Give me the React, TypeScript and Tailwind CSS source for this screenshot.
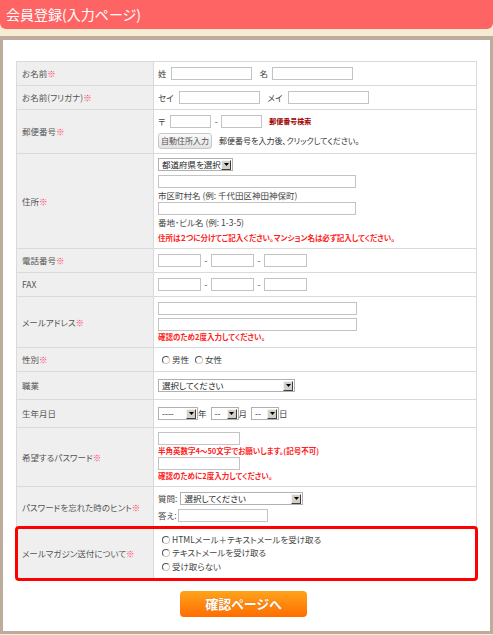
import React from 'react'

type RowProps = {
  label: string
  req?: boolean
  h: string
  children: React.ReactNode
}

const Row = ({ label, req, h, children }: RowProps) => (
  <div className={`flex border-b border-[#dadada] ${h}`}>
    <div className="flex w-[137px] shrink-0 items-center border-r border-[#dadada] bg-[#efefef] pl-[5px] text-[8.5px] text-[#555]">
      {label}
      {req && <span className="text-[#ff4466]">※</span>}
    </div>
    <div className="flex flex-1 flex-col justify-center pl-[4px] text-[8.5px] text-[#444]">{children}</div>
  </div>
)

const TextBox = ({ className }: { className: string }) => (
  <input type="text" className={`h-[13px] shrink-0 border border-[#c3c3c3] bg-white ${className}`} />
)

const SelectBox = ({ className, text }: { className: string; text: string }) => (
  <div className={`flex h-[13px] shrink-0 items-center justify-between border border-[#b0b0b0] bg-white pl-[3px] pr-px ${className}`}>
    <span className="text-[8.5px] leading-none text-[#222]">{text}</span>
    <span className="flex h-[10px] w-[10px] items-center justify-center border border-t-[#f4f4f4] border-l-[#f4f4f4] border-r-[#404040] border-b-[#404040] bg-[#d4d0c8]">
      <svg width="5" height="3" viewBox="0 0 5 3">
        <path d="M0 0h5L2.5 3z" fill="#000" />
      </svg>
    </span>
  </div>
)

const Radio = ({ label, className = '' }: { label: string; className?: string }) => (
  <span className={`flex items-center ${className}`}>
    <span className="mr-[2px] h-[8px] w-[8px] rounded-full border border-t-[#555] border-l-[#555] border-r-[#c8c8c8] border-b-[#c8c8c8] bg-white" />
    <span>{label}</span>
  </span>
)

const Note = ({ children }: { children: React.ReactNode }) => (
  <p className="text-[7.5px] font-bold leading-[12px] text-[#ff2222]">{children}</p>
)

const Dash = () => <span className="w-[10px] text-center">-</span>

export default function App() {
  return (
    <div className="h-[635px] w-[493px] overflow-hidden bg-[#f6ecd3] font-['Noto_Sans_CJK_JP',sans-serif] [font-feature-settings:'palt']">
      {/* page title */}
      <div className="flex h-[29px] items-center rounded-b-[6px] bg-[#ff6464] pl-[6px] text-[14px] text-white">
        会員登録(入力ページ)
      </div>

      <div className="mt-[7px] h-[598px] border-x-[3px] border-t-[4px] border-b-[3px] border-[#bdac9b] bg-white px-[13px] pt-[21px]">
        <div className="border border-b-0 border-[#dadada]">
          <Row label="お名前" req h="h-[24px]">
            <div className="flex items-center">
              <span>姓</span>
              <TextBox className="ml-[4px] w-[81px]" />
              <span className="ml-[8px]">名</span>
              <TextBox className="ml-[4px] w-[81px]" />
            </div>
          </Row>

          <Row label="お名前(フリガナ)" req h="h-[24px]">
            <div className="flex items-center">
              <span>セイ</span>
              <TextBox className="ml-[5px] w-[81px]" />
              <span className="ml-[8px]">メイ</span>
              <TextBox className="ml-[5px] w-[81px]" />
            </div>
          </Row>

          <Row label="郵便番号" req h="h-[44px]">
            <div className="flex items-center">
              <span>〒</span>
              <TextBox className="ml-[5px] w-[41px]" />
              <Dash />
              <TextBox className="w-[41px]" />
              <span className="ml-[7px] text-[7px] font-bold text-[#a00000]">郵便番号検索</span>
            </div>
            <div className="mt-[5px] flex items-center">
              <button className="h-[16px] w-[54px] rounded-[3px] border border-[#c8c8c8] bg-linear-to-b from-[#fbfbfb] to-[#e2e2e2] text-[8px] text-[#555]">
                自動住所入力
              </button>
              <span className="ml-[7px] text-[8px] text-[#333]">郵便番号を入力後、クリックしてください。</span>
            </div>
          </Row>

          <Row label="住所" req h="h-[95px]">
            <SelectBox className="w-[75px]" text="都道府県を選択" />
            <TextBox className="mt-[4px] w-[198px]" />
            <p className="leading-[14px]">市区町村名 (例: 千代田区神田神保町)</p>
            <TextBox className="w-[198px]" />
            <p className="leading-[14px]">番地･ビル名 (例: 1-3-5)</p>
            <div className="mt-[3px]">
              <Note>住所は２つに分けてご記入ください。マンション名は必ず記入してください。</Note>
            </div>
          </Row>

          <Row label="電話番号" req h="h-[24px]">
            <div className="flex items-center">
              <TextBox className="w-[43px]" />
              <Dash />
              <TextBox className="w-[43px]" />
              <Dash />
              <TextBox className="w-[43px]" />
            </div>
          </Row>

          <Row label="FAX" h="h-[24px]">
            <div className="flex items-center">
              <TextBox className="w-[43px]" />
              <Dash />
              <TextBox className="w-[43px]" />
              <Dash />
              <TextBox className="w-[43px]" />
            </div>
          </Row>

          <Row label="メールアドレス" req h="h-[51px]">
            <TextBox className="w-[199px]" />
            <TextBox className="mt-[3px] w-[199px]" />
            <Note>確認のため2度入力してください。</Note>
          </Row>

          <Row label="性別" req h="h-[24px]">
            <div className="flex items-center pl-[4px]">
              <Radio label="男性" />
              <Radio label="女性" className="ml-[6px]" />
            </div>
          </Row>

          <Row label="職業" h="h-[28px]">
            <SelectBox className="w-[137px]" text="選択してください" />
          </Row>

          <Row label="生年月日" h="h-[28px]">
            <div className="flex items-center">
              <SelectBox className="w-[40px]" text="----" />
              <span>年</span>
              <SelectBox className="ml-[4px] w-[28px]" text="--" />
              <span>月</span>
              <SelectBox className="ml-[4px] w-[28px]" text="--" />
              <span>日</span>
            </div>
          </Row>

          <Row label="希望するパスワード" req h="h-[59px]">
            <TextBox className="w-[82px]" />
            <Note>半角英数字4～50文字でお願いします。(記号不可)</Note>
            <TextBox className="w-[82px]" />
            <Note>確認のために2度入力してください。</Note>
          </Row>

          <Row label="パスワードを忘れた時のヒント" req h="h-[41px]">
            <div className="flex items-center">
              <span>質問:</span>
              <SelectBox className="ml-[3px] w-[123px]" text="選択してください" />
            </div>
            <div className="mt-[4px] flex items-center">
              <span>答え:</span>
              <TextBox className="ml-px w-[90px]" />
            </div>
          </Row>

          <div className="rounded-[2px] outline-[3px] -outline-offset-1 outline-[#ff0000]">
            <Row label="メールマガジン送付について" req h="h-[51px]">
              <div className="flex flex-col pl-[4px] leading-[13.5px]">
                <Radio label="HTMLメール＋テキストメールを受け取る" />
                <Radio label="テキストメールを受け取る" />
                <Radio label="受け取らない" />
              </div>
            </Row>
          </div>
        </div>

        <button className="mt-[12px] ml-[164px] h-[26px] w-[127px] rounded-[4px] bg-linear-to-b from-[#ffa31a] to-[#ff6c00] text-[13px] font-bold text-white [text-shadow:0_0_1px_#c85a00]">
          確認ページへ
        </button>
      </div>
    </div>
  )
}
